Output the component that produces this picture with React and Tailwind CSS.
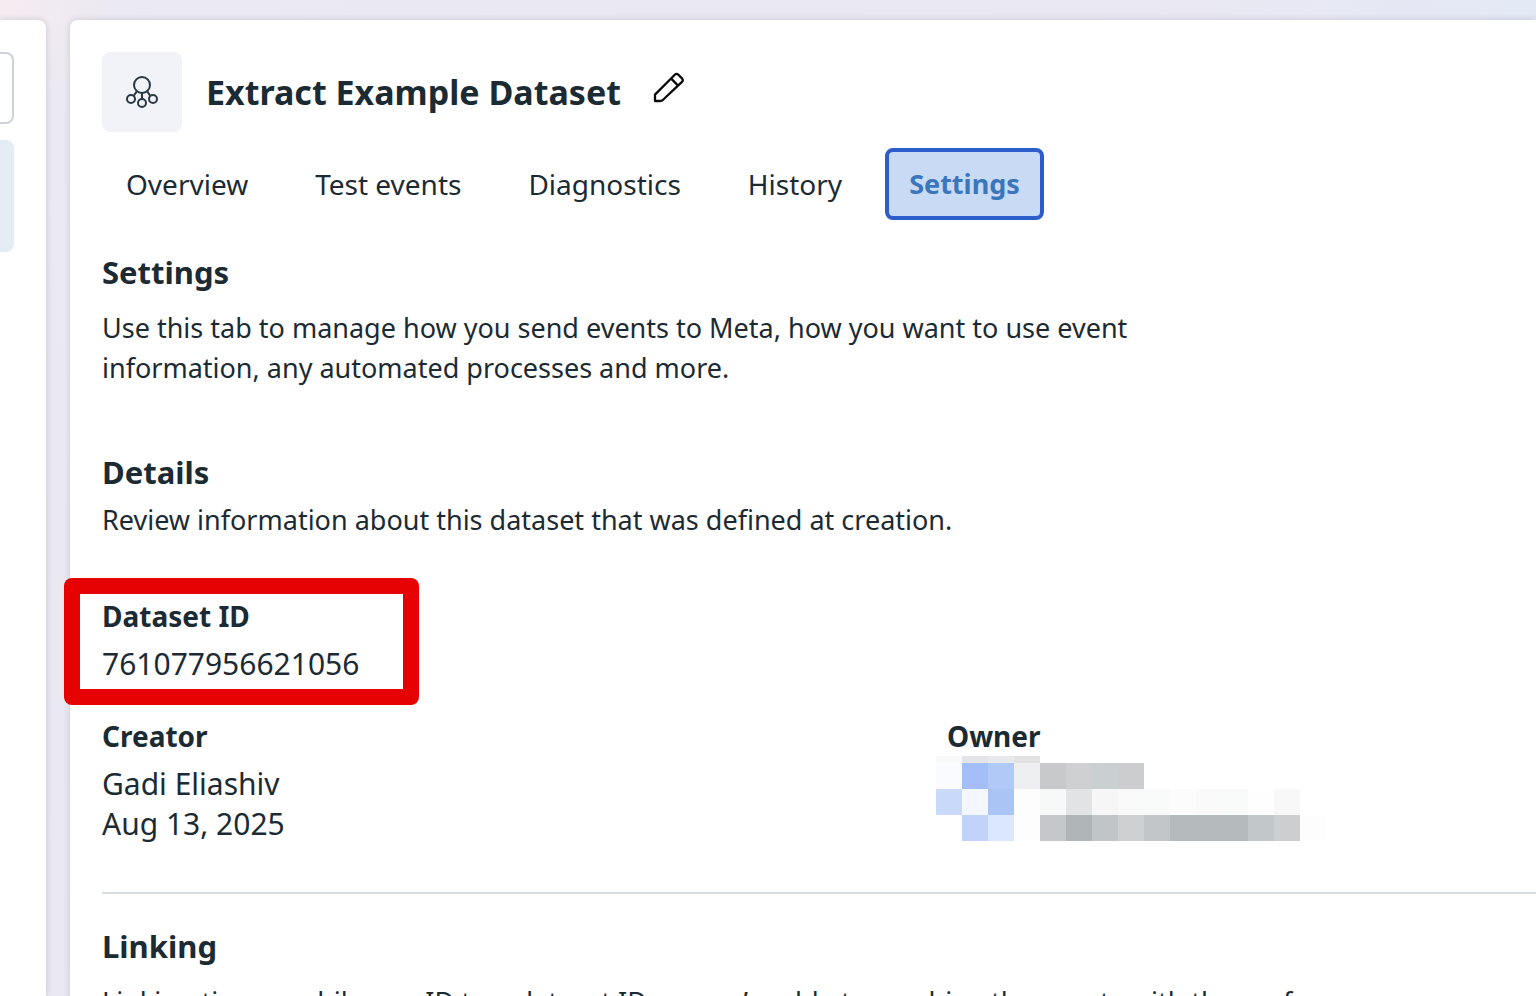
import React from 'react';

const tabs = ['Overview', 'Test events', 'Diagnostics', 'History', 'Settings'];

// redacted owner: one entry per mosaic tile, 26px wide
const mosaic = [
  { y: 0, h: 7, cells: ['#f8f9f8', '#e4e5e6', '#e9eaec', '#e2e2e3'] },
  { y: 7, h: 26, cells: ['#f9fbff', '#a4bff7', '#b0c9f7', '#eeeff1', '#c8c9cb', '#cfd0d2', '#cacfd2', '#cccdcf'] },
  { y: 33, h: 26, cells: ['#c8d9fa', '#f3f8ff', '#aac4f5', '#fdfdfd', '#f7f9f8', '#e2e3e5', '#f6f6f6', '#f9f9f9', '#f8faf9', '#fcfcfc', '#fafafa', '#f9fbfa', '#fefefe', '#f8f8f8'] },
  { y: 59, h: 26, cells: ['#ffffff', '#c1d3f8', '#dbe6ff', '#fdfdfd', '#c6c7cb', '#b0b5b8', '#c1c5c8', '#cfd0d2', '#c2c6c9', '#b5babd', '#b5babd', '#b5babd', '#c2c7ca', '#cdced0', '#fdfdfd'] },
];

const DatasetIcon = () => (
  <svg width="32" height="32" viewBox="0 0 32 32" fill="none" stroke="#283943" strokeWidth="2" aria-hidden="true">
    <circle cx="16" cy="9" r="8" />
    <circle cx="5" cy="23" r="4" />
    <circle cx="16" cy="27" r="4" />
    <circle cx="27" cy="23" r="4" />
    <path d="M10.8 15.4 L7.8 19.8 M16 17 V23 M21.2 15.4 L24.2 19.8" />
  </svg>
);

const PencilIcon = () => (
  <svg width="32" height="32" viewBox="0 0 32 32" fill="none" stroke="#0a0a0a" strokeWidth="2.3" strokeLinejoin="round" aria-hidden="true">
    <path d="M2 29 V22.6 L21.8 2.8 Q23.6 1 25.4 2.8 L29 6.4 Q30.6 8.2 29 9.8 L9.8 28 Q8.8 29 7 29 Z" />
    <path d="M18.2 6.6 L24.8 13.4" />
  </svg>
);

const OwnerMosaic = () => (
  <svg width="390" height="85" viewBox="0 0 390 85" shapeRendering="crispEdges" aria-hidden="true">
    {mosaic.map(row =>
      row.cells.map((fill, i) => (
        <rect key={`${row.y}-${i}`} x={i * 26} y={row.y} width="26" height={row.h} fill={fill} />
      ))
    )}
  </svg>
);

const App = () => {
  return (
    <div className="flex h-screen gap-6 overflow-hidden bg-[radial-gradient(circle_at_top_left,#f6ecf2_0,#ebe9f1_110px,#e9e8f3_1200px,#e3e9f5_1536px)] pt-5 font-['Noto_Sans',sans-serif] text-[#1c2b33]">
      <aside className="h-full w-[46px] shrink-0 rounded-tr-lg bg-white pt-8 pr-8 shadow-[0_0_6px_rgba(60,50,90,0.2)]">
        <div className="h-[72px] w-[14px] rounded-r-lg border-2 border-l-0 border-[#cbd2d9]" />
        <div className="mt-4 h-28 w-[14px] rounded-r-lg bg-[#e4edf6]" />
      </aside>

      <main className="min-w-0 flex-1 self-start rounded-tl-lg bg-white pt-8 pb-10 pl-8 shadow-[0_0_6px_rgba(60,50,90,0.2)]">
        <header className="flex items-center">
          <div className="flex size-20 items-center justify-center rounded-lg bg-[#f1f3f8]">
            <DatasetIcon />
          </div>
          <h1 className="ml-6 text-[34px] leading-10 font-bold">Extract Example Dataset</h1>
          <button type="button" aria-label="Edit name" className="mb-2 ml-8">
            <PencilIcon />
          </button>
        </header>

        <nav className="mt-4 flex gap-[19px]">
          {tabs.map(tab => (
            <button
              key={tab}
              type="button"
              className={`h-[72px] rounded-lg border-4 px-5 leading-10 ${tab === 'Settings' ? 'border-[#2c5dcb] bg-[#c9daf4] text-[27px] font-bold text-[#3b76bd]' : 'border-transparent text-[28px]'}`}
            >
              {tab}
            </button>
          ))}
        </nav>

        <section className="mt-8">
          <h2 className="text-[31px] leading-10 font-bold">Settings</h2>
          <p className="mt-4 max-w-[1060px] text-[27px] leading-10">
            Use this tab to manage how you send events to Meta, how you want to use event information, any automated processes and more.
          </p>
        </section>

        <section className="mt-16">
          <h2 className="text-[31px] leading-10 font-bold">Details</h2>
          <p className="mt-2 text-[27px] leading-10">Review information about this dataset that was defined at creation.</p>

          <div className="mt-[38px] -ml-[38px] w-[355px] rounded-lg bg-[#e60202] p-4">
            <div className="bg-white pt-0.5 pb-[5px] pl-[22px]">
              <h3 className="text-[28px] leading-10 font-bold">Dataset ID</h3>
              <p className="mt-2 text-[30px] leading-10">761077956621056</p>
            </div>
          </div>

          <div className="mt-[11px] flex">
            <div className="w-[845px] shrink-0">
              <h3 className="text-[28px] leading-10 font-bold">Creator</h3>
              <p className="mt-2 text-[30px] leading-10">
                Gadi Eliashiv
                <br />
                Aug 13, 2025
              </p>
            </div>
            <div>
              <h3 className="text-[28px] leading-10 font-bold">Owner</h3>
              <div className="-ml-[11px]">
                <OwnerMosaic />
              </div>
            </div>
          </div>
        </section>

        <hr className="mt-12 border-t-2 border-[#d9dde1]" />

        <section className="mt-8">
          <h2 className="text-[31px] leading-10 font-bold">Linking</h2>
          <p className="mt-4 text-[27px] leading-10">
            Linking ties a mobile app ID to a dataset ID, so you’re able to combine the events with the performance
          </p>
        </section>
      </main>
    </div>
  );
};

export default App;
